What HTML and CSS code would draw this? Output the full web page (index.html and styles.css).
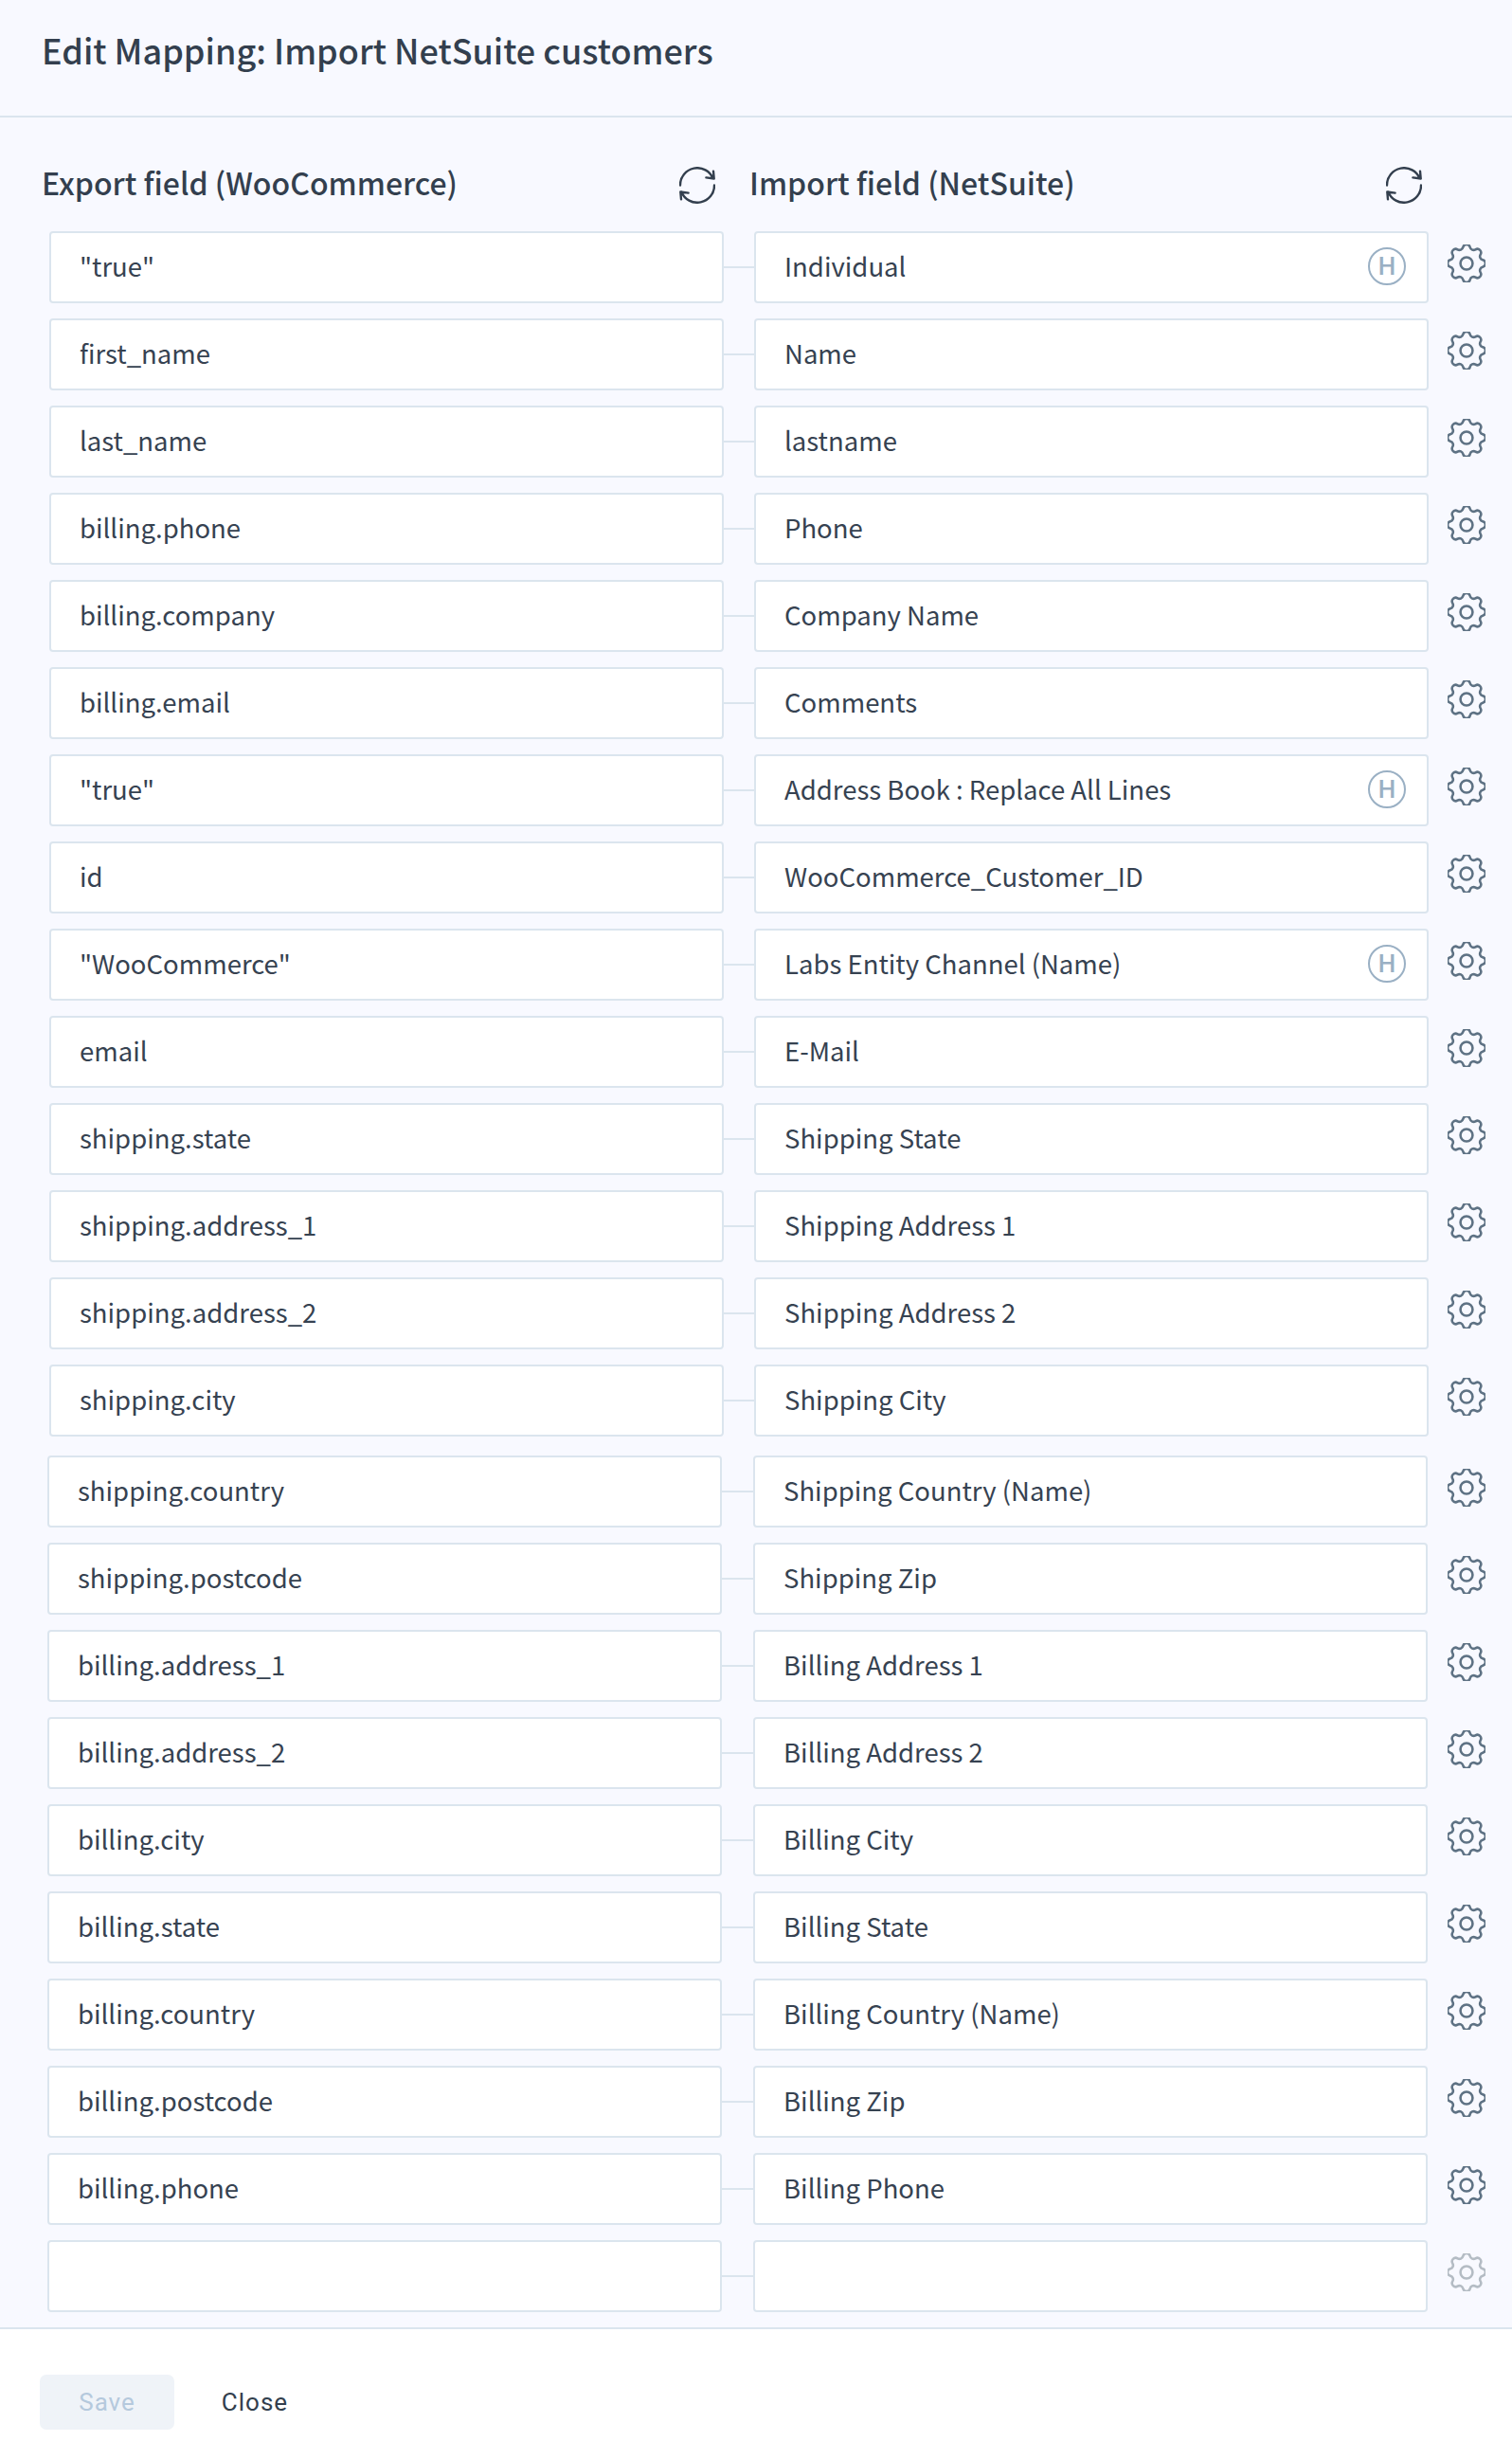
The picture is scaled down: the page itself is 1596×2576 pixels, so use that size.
FILE: index.html
```html
<!DOCTYPE html>
<html lang="en">
<head>
<meta charset="utf-8">
<title>Edit Mapping</title>
<link rel="stylesheet" href="styles.css">
</head>
<body>
<svg class="defs" width="0" height="0" aria-hidden="true">
  <symbol id="gear" viewBox="3 3 18 18">
    <path d="M10.325 4.317c.426-1.756 2.924-1.756 3.35 0a1.724 1.724 0 002.573 1.066c1.543-.94 3.31.826 2.37 2.37a1.724 1.724 0 001.065 2.572c1.756.426 1.756 2.924 0 3.35a1.724 1.724 0 00-1.066 2.573c.94 1.543-.826 3.31-2.37 2.37a1.724 1.724 0 00-2.572 1.065c-.426 1.756-2.924 1.756-3.35 0a1.724 1.724 0 00-2.573-1.066c-1.543.94-3.31-.826-2.37-2.37a1.724 1.724 0 00-1.065-2.572c-1.756-.426-1.756-2.924 0-3.35a1.724 1.724 0 001.066-2.573c-.94-1.543.826-3.31 2.37-2.37.996.608 2.296.07 2.572-1.065z"/>
    <circle cx="12" cy="12" r="2.9"/>
  </symbol>
  <symbol id="refresh" viewBox="0 0 38 39">
    <path d="M1 19.5A18 18 0 0 1 35.7 12.5M28.4 11.4L36.7 12.5L36 4.7"/>
    <path d="M37 19.5A18 18 0 0 1 2.3 26.5M9.6 27.6L1.3 26.5L2 34.3"/>
  </symbol>
</svg>
<header class="top"><h1 class="title">Edit Mapping: Import NetSuite customers</h1></header>
<main class="body">
  <div class="heads">
    <div class="head head-left"><h2 class="head-text">Export field (WooCommerce)</h2><svg class="refresh"><use href="#refresh"/></svg></div>
    <div class="head head-right"><h2 class="head-text">Import field (NetSuite)</h2><svg class="refresh"><use href="#refresh"/></svg></div>
  </div>
  <div class="group group-a">
    <div class="row"><div class="box">"true"</div><span class="link"></span><div class="box box-r">Individual<span class="hard">H</span></div><svg class="gear"><use href="#gear"/></svg></div>
    <div class="row"><div class="box">first_name</div><span class="link"></span><div class="box box-r">Name</div><svg class="gear"><use href="#gear"/></svg></div>
    <div class="row"><div class="box">last_name</div><span class="link"></span><div class="box box-r">lastname</div><svg class="gear"><use href="#gear"/></svg></div>
    <div class="row"><div class="box">billing.phone</div><span class="link"></span><div class="box box-r">Phone</div><svg class="gear"><use href="#gear"/></svg></div>
    <div class="row"><div class="box">billing.company</div><span class="link"></span><div class="box box-r">Company Name</div><svg class="gear"><use href="#gear"/></svg></div>
    <div class="row"><div class="box">billing.email</div><span class="link"></span><div class="box box-r">Comments</div><svg class="gear"><use href="#gear"/></svg></div>
    <div class="row"><div class="box">"true"</div><span class="link"></span><div class="box box-r">Address Book : Replace All Lines<span class="hard">H</span></div><svg class="gear"><use href="#gear"/></svg></div>
    <div class="row"><div class="box">id</div><span class="link"></span><div class="box box-r">WooCommerce_Customer_ID</div><svg class="gear"><use href="#gear"/></svg></div>
    <div class="row"><div class="box">"WooCommerce"</div><span class="link"></span><div class="box box-r">Labs Entity Channel (Name)<span class="hard">H</span></div><svg class="gear"><use href="#gear"/></svg></div>
    <div class="row"><div class="box">email</div><span class="link"></span><div class="box box-r">E-Mail</div><svg class="gear"><use href="#gear"/></svg></div>
    <div class="row"><div class="box">shipping.state</div><span class="link"></span><div class="box box-r">Shipping State</div><svg class="gear"><use href="#gear"/></svg></div>
    <div class="row"><div class="box">shipping.address_1</div><span class="link"></span><div class="box box-r">Shipping Address 1</div><svg class="gear"><use href="#gear"/></svg></div>
    <div class="row"><div class="box">shipping.address_2</div><span class="link"></span><div class="box box-r">Shipping Address 2</div><svg class="gear"><use href="#gear"/></svg></div>
    <div class="row"><div class="box">shipping.city</div><span class="link"></span><div class="box box-r">Shipping City</div><svg class="gear"><use href="#gear"/></svg></div>
  </div>
  <div class="group group-b">
    <div class="row"><div class="box">shipping.country</div><span class="link"></span><div class="box box-r">Shipping Country (Name)</div><svg class="gear"><use href="#gear"/></svg></div>
    <div class="row"><div class="box">shipping.postcode</div><span class="link"></span><div class="box box-r">Shipping Zip</div><svg class="gear"><use href="#gear"/></svg></div>
    <div class="row"><div class="box">billing.address_1</div><span class="link"></span><div class="box box-r">Billing Address 1</div><svg class="gear"><use href="#gear"/></svg></div>
    <div class="row"><div class="box">billing.address_2</div><span class="link"></span><div class="box box-r">Billing Address 2</div><svg class="gear"><use href="#gear"/></svg></div>
    <div class="row"><div class="box">billing.city</div><span class="link"></span><div class="box box-r">Billing City</div><svg class="gear"><use href="#gear"/></svg></div>
    <div class="row"><div class="box">billing.state</div><span class="link"></span><div class="box box-r">Billing State</div><svg class="gear"><use href="#gear"/></svg></div>
    <div class="row"><div class="box">billing.country</div><span class="link"></span><div class="box box-r">Billing Country (Name)</div><svg class="gear"><use href="#gear"/></svg></div>
    <div class="row"><div class="box">billing.postcode</div><span class="link"></span><div class="box box-r">Billing Zip</div><svg class="gear"><use href="#gear"/></svg></div>
    <div class="row"><div class="box">billing.phone</div><span class="link"></span><div class="box box-r">Billing Phone</div><svg class="gear"><use href="#gear"/></svg></div>
    <div class="row"><div class="box"></div><span class="link"></span><div class="box box-r"></div><svg class="gear gear-off"><use href="#gear"/></svg></div>
  </div>
</main>
<footer class="foot">
  <button class="btn btn-save" type="button">Save</button>
  <button class="btn btn-close" type="button">Close</button>
</footer>
</body>
</html>
```
FILE: styles.css
```css
* { box-sizing: border-box; }
html, body { margin: 0; padding: 0; }
body {
  width: 1596px;
  height: 2576px;
  background: #fff;
  color: #364251;
  font-family: "Noto Sans CJK SC", "Noto Sans", sans-serif;
  overflow: hidden;
}
.defs { position: absolute; }
.top {
  height: 124px;
  background: #f8f9ff;
  border-bottom: 2px solid #dbe5ee;
  padding: 28px 0 0 44px;
}
.title {
  margin: 0;
  font-size: 36px;
  line-height: 48px;
  font-weight: 500;
  color: #333f4e;
}
.body {
  height: 2334px;
  background: #f8f9ff;
  border-bottom: 2px solid #dbe5ee;
  padding-top: 50px;
}
.heads { display: flex; height: 70px; }
.head { display: flex; align-items: flex-start; justify-content: space-between; }
.head-left { width: 711px; margin-left: 44px; }
.head-right { width: 710px; margin-left: 36px; }
.head-text {
  margin: -2px 0 0;
  font-size: 32px;
  line-height: 40px;
  font-weight: 500;
  color: #333f4e;
}
.refresh {
  width: 38px;
  height: 39px;
  margin-top: 2px;
  overflow: visible;
  fill: none;
  stroke: #333f4e;
  stroke-width: 2.4;
  stroke-linecap: round;
  stroke-linejoin: round;
}
.group { display: flex; flex-direction: column; gap: 16px; }
.group-a { padding-left: 52px; }
.group-b { padding-left: 50px; margin-top: 20px; }
.row { display: flex; align-items: center; height: 76px; }
.box {
  width: 712px;
  height: 76px;
  display: flex;
  align-items: center;
  justify-content: space-between;
  background: #fff;
  border: 2px solid #dbe5ee;
  border-radius: 4px;
  padding: 0 22px 4px 30px;
  font-size: 27.5px;
  line-height: 40px;
  white-space: nowrap;
}
.group-b .link { width: 33px; }
.group-b .gear { margin-left: 21px; }
.link { width: 32px; height: 2px; background: #dbe5ee; }
.hard {
  width: 40px;
  height: 40px;
  border: 2.5px solid #9ab0c4;
  border-radius: 50%;
  display: flex;
  align-items: center;
  justify-content: center;
  color: #9ab0c4;
  font-family: "Roboto", sans-serif;
  font-size: 26px;
  font-weight: 500;
  line-height: 1;
  margin-top: 2px;
}
.gear {
  width: 40px;
  height: 40px;
  margin-left: 20px;
  margin-top: -8px;
  fill: none;
  stroke: #5e7284;
  stroke-width: 1.15;
  overflow: visible;
}
.gear-off { stroke: #b4bcc4; }
.foot {
  height: 118px;
  background: #fff;
  padding: 48px 0 0 42px;
  display: flex;
  align-items: flex-start;
  gap: 32px;
}
.btn {
  height: 58px;
  border: 0;
  border-radius: 7px;
  background: none;
  font-family: "Roboto", sans-serif;
  font-size: 26px;
  letter-spacing: 1px;
  padding: 0;
}
.btn-save { width: 142px; background: #eff3f8; color: #b5c9dd; }
.btn-close { width: 106px; color: #333f4e; }
```
